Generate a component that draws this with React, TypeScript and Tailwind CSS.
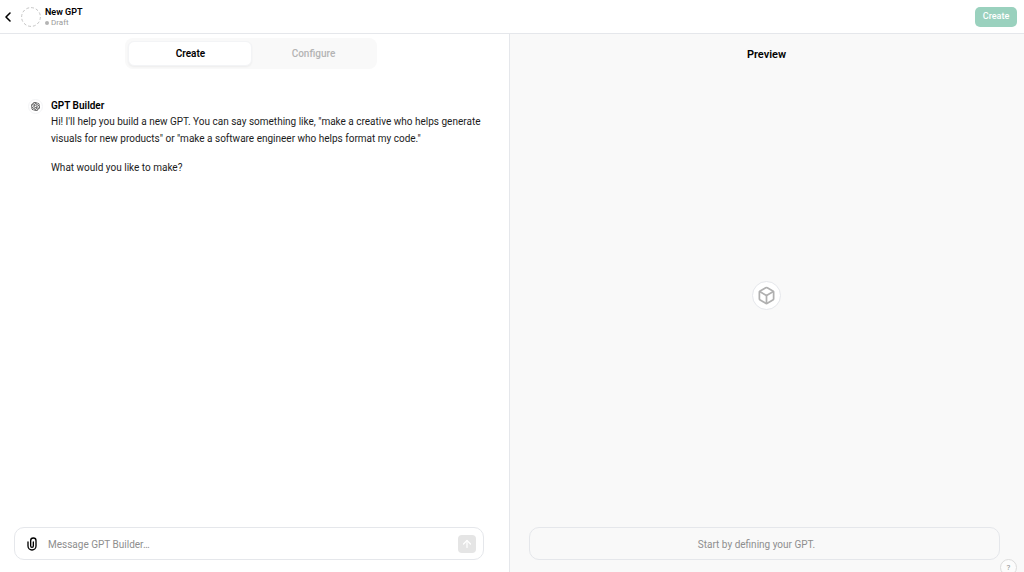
import { FC, useState } from 'react';
import { ArrowUp, Box, ChevronLeft } from 'lucide-react';
import { SiOpenai } from 'react-icons/si';

const tabs = ['Create', 'Configure'] as const;

const ClipIcon: FC = () => (
  <svg
    viewBox="0 0 24 24"
    className="h-4 w-4"
    fill="none"
    stroke="currentColor"
    strokeWidth="2"
    strokeLinecap="round"
  >
    <path d="M6 9v6a6 6 0 0 0 12 0V7a4 4 0 0 0-8 0v8a2 2 0 0 0 4 0V9" />
  </svg>
);

const Header: FC = () => (
  <header className="flex h-[34px] shrink-0 items-center border-b border-gray-200 pr-[7px]">
    <button type="button" aria-label="Back" className="text-black">
      <ChevronLeft className="h-4 w-4" strokeWidth={2.4} />
    </button>
    <svg viewBox="0 0 20 20" className="ml-[5px] h-5 w-5" fill="none">
      <circle
        cx="10"
        cy="10"
        r="9.4"
        stroke="#bdbdbd"
        strokeWidth="0.9"
        strokeDasharray="2.9 2"
      />
    </svg>
    <div className="ml-1 flex flex-col">
      <h1 className="text-[9px] leading-3 font-semibold text-black">
        New GPT
      </h1>
      <p className="flex items-center gap-[2px] text-[8px] leading-[10px] text-[#9b9b9b]">
        <span className="h-1 w-1 rounded-full bg-[#b4b4b4]" />
        Draft
      </p>
    </div>
    <button
      type="button"
      className="ml-auto h-5 w-[42px] rounded-[5px] bg-[#9ad1be] text-[9px] font-medium text-white"
    >
      Create
    </button>
  </header>
);

const Builder: FC = () => {
  const [activeTab, setActiveTab] = useState<string>('Create');

  return (
    <section className="flex min-w-0 flex-1 flex-col px-[14px] pt-1 pb-3">
      {/* Tabs */}
      <div className="mr-[6px] flex h-[31px] w-[252px] self-center rounded-lg bg-[#f9f9f9] p-[3px]">
        {tabs.map((tab) => (
          <button
            key={tab}
            type="button"
            onClick={() => setActiveTab(tab)}
            className={
              tab === activeTab
                ? 'flex-1 rounded-md border border-gray-100 bg-white font-semibold text-black shadow-xs'
                : 'flex-1 rounded-md font-medium text-[#b4b4b4]'
            }
          >
            {tab}
          </button>
        ))}
      </div>

      {/* Messages */}
      <div className="mt-[30px] flex flex-1 gap-2 pr-3 pl-[14px]">
        <div className="flex h-[15px] w-[15px] shrink-0 items-center justify-center rounded-full border border-gray-100">
          <SiOpenai className="h-[9px] w-[9px] text-[#202020]" />
        </div>
        <div className="text-[#1c1c1c]">
          <h2 className="leading-[14px] font-semibold text-black">
            GPT Builder
          </h2>
          <p className="leading-[17px]">
            Hi! I'll help you build a new GPT. You can say something like,
            "make a creative who helps generate visuals for new products" or
            "make a software engineer who helps format my code."
          </p>
          <p className="mt-3 leading-[17px]">What would you like to make?</p>
        </div>
      </div>

      {/* Composer */}
      <form
        onSubmit={(e) => e.preventDefault()}
        className="mr-[11px] flex h-[33px] shrink-0 items-center rounded-[10px] border border-gray-200 pr-[7px] pl-[9px]"
      >
        <button type="button" aria-label="Attach file" className="text-black">
          <ClipIcon />
        </button>
        <input
          type="text"
          aria-label="Message GPT Builder"
          placeholder="Message GPT Builder…"
          className="ml-2 min-w-0 flex-1 pt-px outline-none placeholder:text-[#8e8e8e]"
        />
        <button
          type="submit"
          aria-label="Send"
          className="flex h-[18px] w-[18px] items-center justify-center rounded bg-[#e5e5e5] text-white"
        >
          <ArrowUp className="h-3 w-3" strokeWidth={2.4} />
        </button>
      </form>
    </section>
  );
};

const Preview: FC = () => (
  <section className="relative flex w-[50.3%] flex-col border-l border-gray-200 bg-[#f9f9f9] pt-3 pr-6 pb-3 pl-[19px]">
    <h2 className="ml-1 text-center text-[11px] leading-[17px] font-semibold text-black">
      Preview
    </h2>
    <div className="ml-1 flex flex-1 items-center justify-center">
      <div className="flex h-[29px] w-[29px] items-center justify-center rounded-full border border-gray-200 bg-white">
        <Box className="h-[19px] w-[19px] text-[#b0b0b0]" strokeWidth={2.2} />
      </div>
    </div>
    <div className="flex h-[33px] shrink-0 items-center justify-center rounded-[10px] border border-gray-200 pt-px pr-4 text-[#8e8e8e]">
      Start by defining your GPT.
    </div>
    <button
      type="button"
      aria-label="Help"
      className="absolute right-[7px] -bottom-1 h-[17px] w-[17px] rounded-full border border-[#dcdcdc] bg-[#fcfcfc] text-[8px] leading-[15px] text-[#8e8e8e]"
    >
      ?
    </button>
  </section>
);

const App: FC = () => (
  <div className="flex h-screen flex-col overflow-hidden bg-white font-['Roboto',sans-serif] text-[10px]">
    <Header />
    <main className="flex min-h-0 flex-1">
      <Builder />
      <Preview />
    </main>
  </div>
);

export default App;
